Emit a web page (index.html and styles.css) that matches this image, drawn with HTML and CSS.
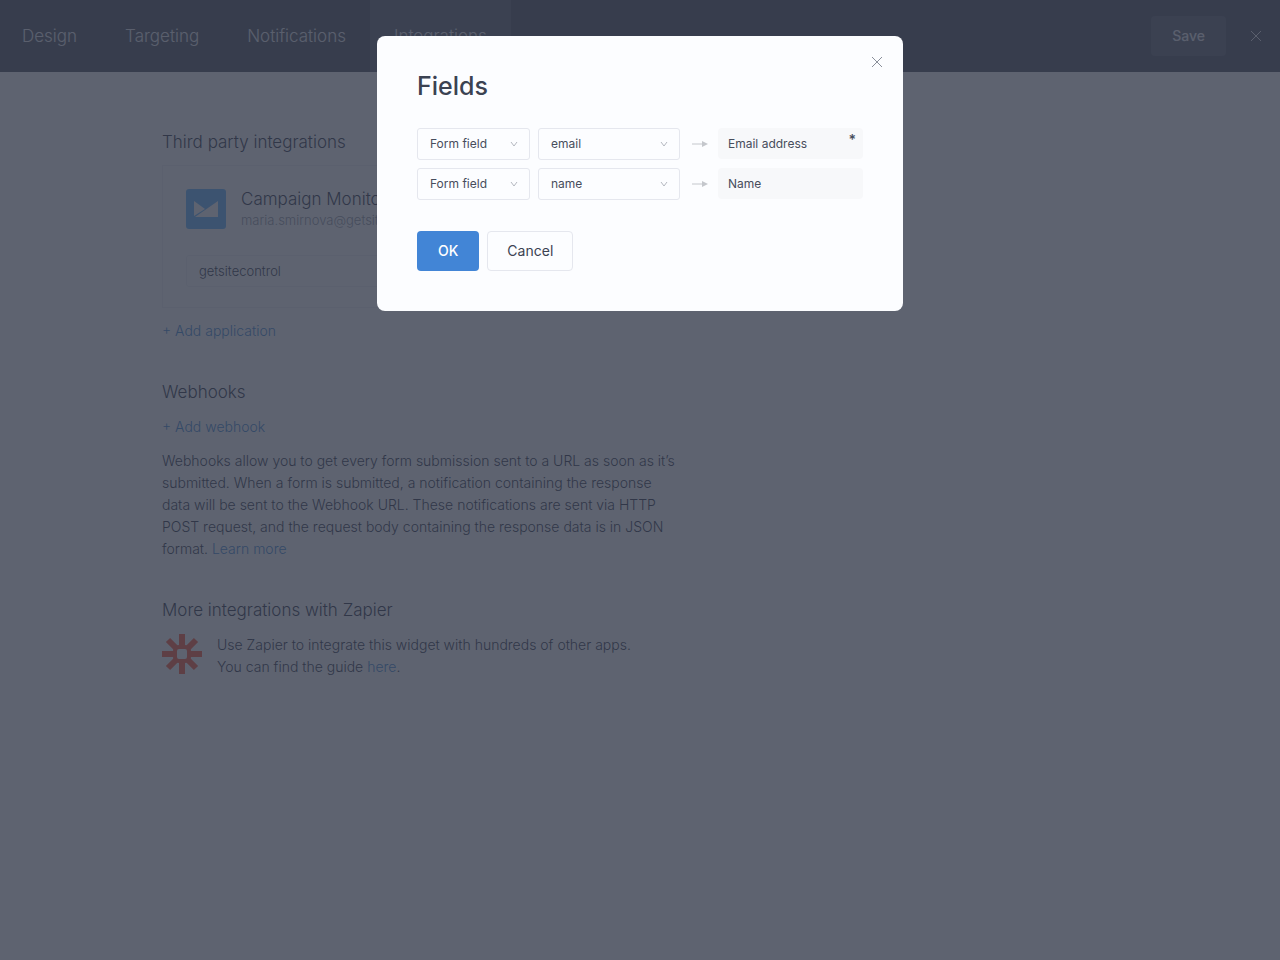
FILE: index.html
```html
<!DOCTYPE html>
<html lang="en">
<head>
    <meta charset="UTF-8">
    <meta name="viewport" content="width=device-width, initial-scale=1.0">
    <title>Integrations</title>
    <link rel="stylesheet" href="styles.css">
</head>
<body>
    <header class="topbar">
        <nav class="tabs">
            <a href="#design">Design</a>
            <a href="#targeting">Targeting</a>
            <a href="#notifications">Notifications</a>
            <a href="#integrations" class="active">Integrations</a>
        </nav>
        <div class="topbar-actions">
            <button type="button" class="btn-save">Save</button>
            <button type="button" class="btn-icon" aria-label="Close editor">
                <svg width="12" height="12" viewBox="0 0 12 12" fill="none" stroke="currentColor"><path d="M1 1l10 10M11 1L1 11"/></svg>
            </button>
        </div>
    </header>

    <main class="content">
        <section class="section">
            <h2>Third party integrations</h2>
            <div class="app-card">
                <div class="app-head">
                    <svg class="app-logo" width="40" height="40" viewBox="0 0 40 40">
                        <rect width="40" height="40" rx="3" fill="#58b0ff"/>
                        <path d="M8 12l11 8L8 27z" fill="#fff"/>
                        <path d="M32 12v16H9z" fill="#fff"/>
                    </svg>
                    <div>
                        <div class="app-name">Campaign Monitor</div>
                        <div class="app-mail">maria.smirnova@getsitecontrol.com</div>
                    </div>
                </div>
                <div class="select app-list">
                    <select aria-label="List">
                        <option>getsitecontrol</option>
                    </select>
                </div>
            </div>
            <a href="#add-application" class="add-link">+ Add application</a>
        </section>

        <section class="section webhooks">
            <h2>Webhooks</h2>
            <a href="#add-webhook" class="add-link">+ Add webhook</a>
            <p>Webhooks allow you to get every form submission sent to a URL as soon as it’s<br>
                submitted. When a form is submitted, a notification containing the response<br>
                data will be sent to the Webhook URL. These notifications are sent via HTTP<br>
                POST request, and the request body containing the response data is in JSON<br>
                format. <a href="#learn">Learn more</a></p>
        </section>

        <section class="section">
            <h2>More integrations with Zapier</h2>
            <div class="zapier">
                <svg width="40" height="40" viewBox="0 0 40 40" fill="none" stroke="#ff4a2a" stroke-width="6">
                    <path d="M20 0v14M20 26v14M0 20h14M26 20h14M6 6l9 9M25 25l9 9M34 6l-9 9M15 25l-9 9"/>
                    <rect x="13" y="13" width="14" height="14" rx="4" stroke-width="4"/>
                </svg>
                <p>Use Zapier to integrate this widget with hundreds of other apps.<br>
                    You can find the guide <a href="#guide">here</a>.</p>
            </div>
        </section>
    </main>

    <div class="overlay">
        <form class="modal" role="dialog" aria-labelledby="modalTitle">
            <button type="button" class="modal-close" aria-label="Close">
                <svg width="12" height="12" viewBox="0 0 12 12" fill="none" stroke="currentColor"><path d="M1 1l10 10M11 1L1 11"/></svg>
            </button>
            <h1 id="modalTitle">Fields</h1>

            <div class="fields">
                <div class="field-row">
                    <div class="select">
                        <select aria-label="Source of email address">
                            <option>Form field</option>
                        </select>
                        <svg width="8" height="6" viewBox="0 0 8 6" fill="none" stroke="currentColor"><path d="M1 1l3 4 3-4"/></svg>
                    </div>
                    <div class="select">
                        <select id="emailField">
                            <option>email</option>
                            <option>name</option>
                        </select>
                        <svg width="8" height="6" viewBox="0 0 8 6" fill="none" stroke="currentColor"><path d="M1 1l3 4 3-4"/></svg>
                    </div>
                    <svg class="arrow" width="16" height="6" viewBox="0 0 16 6"><path d="M0 3h11" stroke="currentColor"/><path d="M10 0l6 3-6 3z" fill="currentColor"/></svg>
                    <label class="target" for="emailField">Email address<span class="required">*</span></label>
                </div>
                <div class="field-row">
                    <div class="select">
                        <select aria-label="Source of name">
                            <option>Form field</option>
                        </select>
                        <svg width="8" height="6" viewBox="0 0 8 6" fill="none" stroke="currentColor"><path d="M1 1l3 4 3-4"/></svg>
                    </div>
                    <div class="select">
                        <select id="nameField">
                            <option>name</option>
                            <option>email</option>
                        </select>
                        <svg width="8" height="6" viewBox="0 0 8 6" fill="none" stroke="currentColor"><path d="M1 1l3 4 3-4"/></svg>
                    </div>
                    <svg class="arrow" width="16" height="6" viewBox="0 0 16 6"><path d="M0 3h11" stroke="currentColor"/><path d="M10 0l6 3-6 3z" fill="currentColor"/></svg>
                    <label class="target" for="nameField">Name</label>
                </div>
            </div>

            <div class="modal-buttons">
                <button type="button" class="btn btn-primary">OK</button>
                <button type="button" class="btn btn-secondary">Cancel</button>
            </div>
        </form>
    </div>
</body>
</html>
```
FILE: styles.css
```css
* {
    margin: 0;
    padding: 0;
    box-sizing: border-box;
}

body {
    font-family: Inter, 'Open Sans', sans-serif;
    font-size: 14px;
    font-weight: 300;
    line-height: 22px;
    color: #20263a;
    background: #fff;
    min-height: 100vh;
}

a {
    color: #3080d0;
    text-decoration: none;
}

button,
select {
    font: inherit;
    color: inherit;
    cursor: pointer;
}

svg {
    display: block;
    flex: none;
}

/* top bar */
.topbar {
    display: flex;
    justify-content: space-between;
    height: 72px;
    background: #3d4352;
}

.tabs {
    display: flex;
    margin-left: -2px;
}

.tabs a {
    display: flex;
    align-items: center;
    padding: 0 24px;
    font-size: 17px;
    color: #e8eaf0;
}

.tabs .active {
    background: #4f5565;
}

.topbar-actions {
    display: flex;
    align-items: center;
    gap: 16px;
    padding-right: 10px;
}

.btn-save {
    height: 40px;
    padding: 0 21px;
    border: none;
    border-radius: 4px;
    background: #4f5565;
    color: #e8eaf0;
    font-weight: 500;
}

.btn-icon {
    padding: 8px;
    border: none;
    background: none;
    color: #e8eaf0;
}

/* page */
.content {
    max-width: 690px;
    padding: 58px 0 40px 162px;
}

.section {
    margin-bottom: 38px;
}

.section h2 {
    font-size: 17px;
    font-weight: 300;
    line-height: 24px;
}

.app-card {
    margin: 11px 0 12px;
    padding: 23px 23px 20px;
    border: 1px solid #eff0f4;
}

.app-head {
    display: flex;
    gap: 15px;
    margin-bottom: 24px;
}

.app-name {
    font-size: 17px;
    line-height: 20px;
}

.app-mail {
    font-size: 13px;
    line-height: 22px;
    color: #8a8f9c;
}

.add-link {
    display: block;
}

.webhooks .add-link {
    margin: 12px 0;
}

.zapier {
    display: flex;
    gap: 15px;
    margin-top: 12px;
}

/* modal */
.overlay {
    position: fixed;
    inset: 0;
    display: flex;
    justify-content: center;
    align-items: flex-start;
    padding: 36px 20px;
    background: rgba(54, 60, 76, 0.8);
}

.modal {
    position: relative;
    width: 100%;
    max-width: 526px;
    padding: 32px 40px 40px;
    border-radius: 8px;
    background: #fcfdff;
    color: #3b4252;
    font-weight: 400;
}

.modal h1 {
    margin-bottom: 24px;
    font-size: 25px;
    font-weight: 500;
    line-height: 36px;
}

.modal-close {
    position: absolute;
    top: 12px;
    right: 12px;
    padding: 8px;
    border: none;
    background: none;
    color: #8a8f9a;
}

.fields {
    display: grid;
    gap: 8px;
    margin-bottom: 31px;
    font-size: 12px;
    color: #474d5c;
}

.field-row {
    display: grid;
    grid-template-columns: 113px 1fr 22px 145px;
    align-items: start;
    column-gap: 8px;
}

.select {
    display: grid;
    align-items: center;
}

.select select,
.select svg {
    grid-area: 1 / 1;
}

.select select {
    appearance: none;
    width: 100%;
    height: 32px;
    padding: 0 12px;
    border: 1px solid #e5e7ee;
    border-radius: 3px;
    background: transparent;
}

.select svg {
    justify-self: end;
    margin-right: 12px;
    color: #b4b8c0;
    pointer-events: none;
}

.app-list {
    font-size: 13px;
}

.app-list select {
    border-color: #eff0f4;
}

.arrow {
    align-self: center;
    margin: 0 4px;
    color: #c4c7cc;
}

.target {
    display: flex;
    justify-content: space-between;
    height: 31px;
    padding: 0 7px 0 10px;
    border-radius: 4px;
    background: #f7f8fa;
    line-height: 31px;
}

.required {
    font-size: 14px;
    font-weight: 600;
    line-height: 24px;
}

.modal-buttons {
    display: flex;
    gap: 8px;
}

.btn {
    height: 40px;
    padding: 0 19px;
    border: 1px solid transparent;
    border-radius: 4px;
}

.btn-primary {
    padding: 0 20px;
    background: #4285d6;
    color: #fff;
    font-weight: 500;
}

.btn-secondary {
    border-color: #e5e7ee;
    background: transparent;
}
```
